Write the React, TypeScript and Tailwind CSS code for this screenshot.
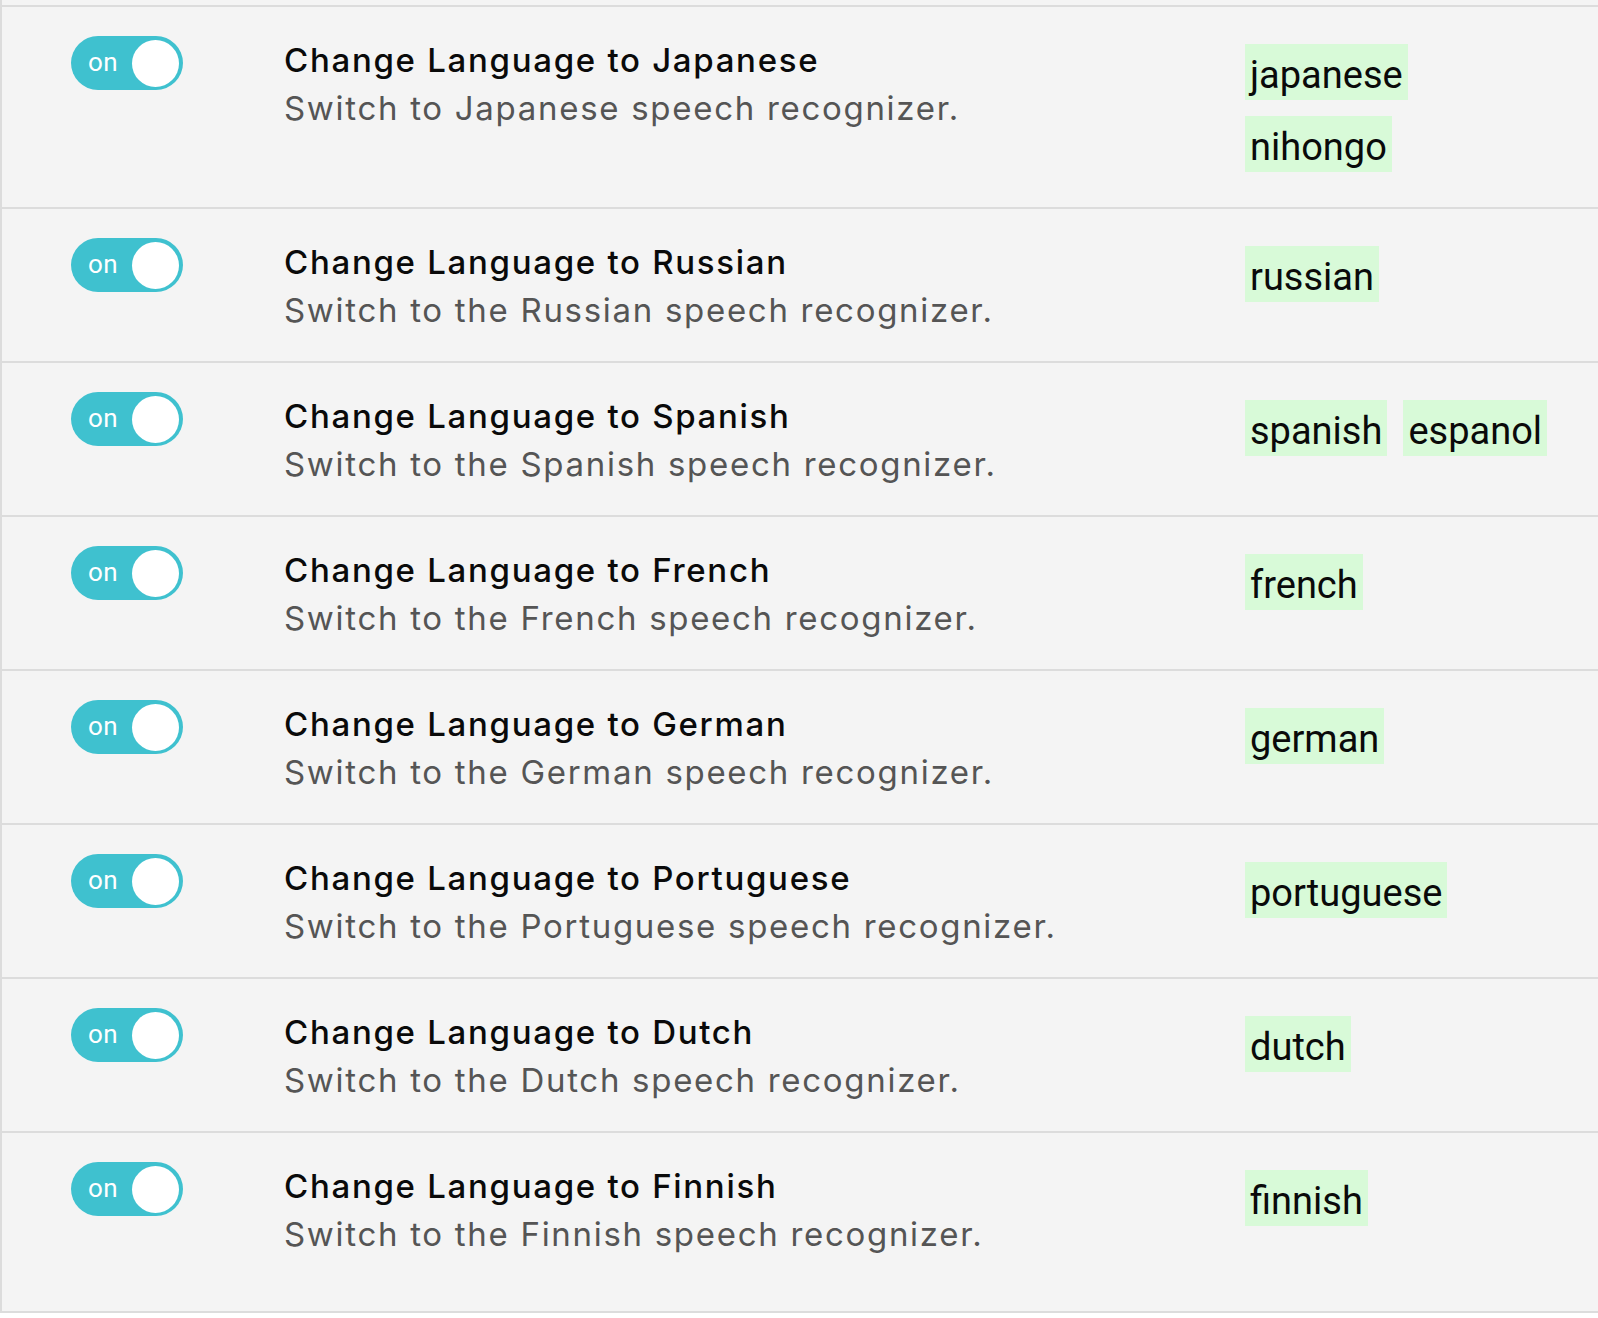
import React from "react";

type Row = { lang: string; desc: string; tags: string[]; stack?: boolean };

const rows: Row[] = [
  { lang: "Japanese", desc: "Switch to Japanese speech recognizer.", tags: ["japanese", "nihongo"], stack: true },
  { lang: "Russian", desc: "Switch to the Russian speech recognizer.", tags: ["russian"] },
  { lang: "Spanish", desc: "Switch to the Spanish speech recognizer.", tags: ["spanish", "espanol"] },
  { lang: "French", desc: "Switch to the French speech recognizer.", tags: ["french"] },
  { lang: "German", desc: "Switch to the German speech recognizer.", tags: ["german"] },
  { lang: "Portuguese", desc: "Switch to the Portuguese speech recognizer.", tags: ["portuguese"] },
  { lang: "Dutch", desc: "Switch to the Dutch speech recognizer.", tags: ["dutch"] },
  { lang: "Finnish", desc: "Switch to the Finnish speech recognizer.", tags: ["finnish"] },
];

function Toggle() {
  return (
    <div className="flex h-[54px] w-[112px] shrink-0 items-center justify-between rounded-full bg-[#3fc1cf] pl-[17px] pr-[4px]">
      <span className="pb-[3px] font-['Roboto'] text-[26px] leading-none tracking-[0.5px] text-white">on</span>
      <span className="h-[47px] w-[47px] rounded-full bg-white" />
    </div>
  );
}

export default function App() {
  return (
    <div className="min-h-[1318px] w-[1598px] bg-white font-['Roboto',sans-serif]">
      <div className="border-l-[2px] border-b-[2px] border-[#dcdcdc] bg-[#f4f4f4] pb-[26px]">
        <div className="h-[5px]" />
        {rows.map((r) => (
          <div key={r.lang} className="flex border-t-[2px] border-[#dcdcdc] pt-[29px] pb-[27px]">
            <div className="w-[282px] shrink-0 pl-[69px]">
              <Toggle />
            </div>
            <div className="w-[961px] shrink-0 font-['Inter',sans-serif]">
              <div className="text-[33px] font-medium leading-[48px] tracking-[1.7px] text-[#0a0a0a]">
                Change Language to {r.lang}
              </div>
              <div className="text-[33px] leading-[48px] tracking-[1.7px] text-[#555555]">{r.desc}</div>
            </div>
            <div className={r.stack ? "flex flex-col items-start" : "flex flex-row items-start"}>
              {r.tags.map((t) => (
                <span
                  key={t}
                  className="my-[8px] mr-[16px] flex h-[56px] items-center bg-[#d8fad8] px-[5px] pt-[5px] text-[38px] leading-none text-[#0a0a0a]"
                >
                  {t}
                </span>
              ))}
            </div>
          </div>
        ))}
      </div>
    </div>
  );
}
